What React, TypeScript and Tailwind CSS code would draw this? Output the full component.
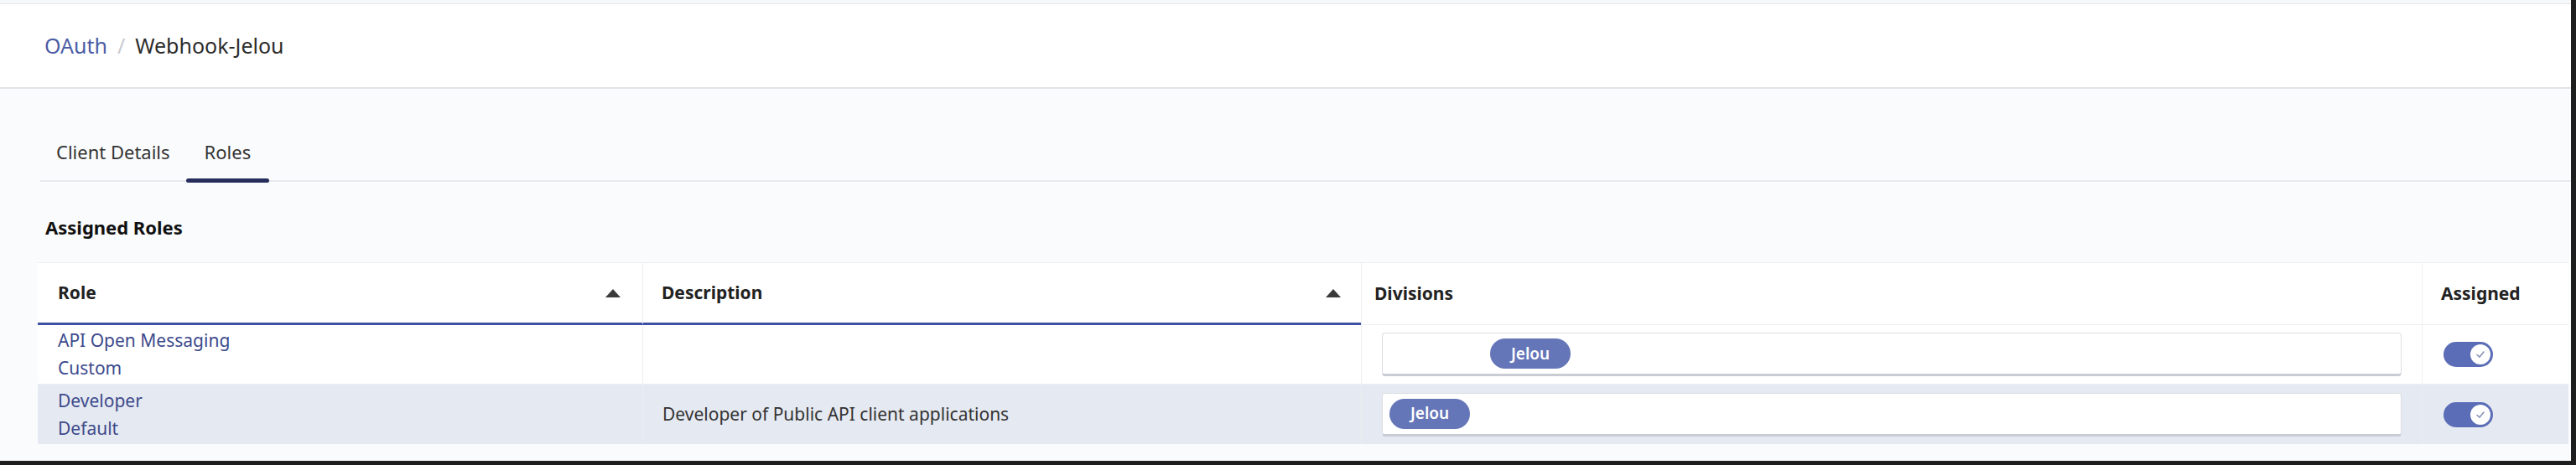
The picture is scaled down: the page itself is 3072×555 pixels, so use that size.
import React from "react";

type Row = {
  role: string;
  kind: string;
  description: string;
  pillOffset: string;
  shaded: boolean;
};

const rows: Row[] = [
  { role: "API Open Messaging", kind: "Custom", description: "", pillOffset: "ml-[128px]", shaded: false },
  {
    role: "Developer",
    kind: "Default",
    description: "Developer of Public API client applications",
    pillOffset: "ml-[8px]",
    shaded: true,
  },
];

function SortArrow() {
  return (
    <svg width="22" height="12" viewBox="0 0 22 12" className="shrink-0">
      <path d="M11 1 L20 11 L2 11 Z" fill="#3a3a3a" />
    </svg>
  );
}

function Toggle() {
  return (
    <div className="flex h-[30px] w-[59px] items-center justify-end rounded-full bg-[#5b6db7] pr-[3px]">
      <div className="flex h-[24px] w-[24px] items-center justify-center rounded-full bg-white">
        <svg width="14" height="14" viewBox="0 0 14 14">
          <path d="M3 7.5 L6 10 L11 4" fill="none" stroke="#8a93b8" strokeWidth="1.6" strokeLinecap="round" />
        </svg>
      </div>
    </div>
  );
}

export default function App() {
  return (
    <div
      className="flex h-[555px] w-[3072px] flex-col overflow-hidden border-b-[5px] border-r-[6px] border-[#1e1e1e] bg-[#fafbfc] text-[#222]"
      style={{ fontFamily: '"Noto Sans", "Open Sans", sans-serif' }}
    >
      <div className="h-[5px] border-b border-[#e4e5e8] bg-[#f6f7f8]" />

      {/* breadcrumb header */}
      <header className="flex h-[101px] items-center border-b-2 border-[#e2e3e6] bg-white pl-[53px] text-[25px]">
        <span className="text-[#4b5ca6]">OAuth</span>
        <span className="mx-[12px] text-[#c9cbd0]">/</span>
        <span className="text-[#2c2c2c]">Webhook-Jelou</span>
      </header>

      {/* tabs */}
      <div className="ml-[48px] mt-[56px] flex h-[55px] items-stretch border-b-2 border-[#e8e9ec] text-[22px] text-[#333]">
        <div className="px-[19px] pt-[3px]">Client Details</div>
        <div className="relative px-[22px] pt-[3px]">
          Roles
          <div className="absolute bottom-[-3px] left-[0px] right-[0px] h-[5px] rounded-full bg-[#262c5c]" />
        </div>
      </div>

      <div className="ml-[54px] mt-[38px] text-[22px] font-bold text-[#111]">Assigned Roles</div>

      {/* table */}
      <div className="ml-[45px] mr-[3px] mt-[25px] border-t border-[#eceef1] bg-white text-[21px]">
        <div className="grid grid-cols-[721px_857px_1265px_175px]">
          <div className="flex h-[74px] items-center justify-between border-b-[3px] border-[#3f51a5] pl-[24px] pr-[24px] font-bold">
            <span>Role</span>
            <SortArrow />
          </div>
          <div className="flex h-[74px] items-center justify-between border-b-[3px] border-l border-[#3f51a5] border-l-[#eceef1] pl-[22px] pr-[22px] font-bold">
            <span>Description</span>
            <SortArrow />
          </div>
          <div className="flex h-[74px] items-center border-b border-l border-[#eceef1] pl-[15px] font-bold">
            Divisions
          </div>
          <div className="flex h-[74px] items-center border-b border-l border-[#eceef1] pl-[22px] font-bold">
            Assigned
          </div>

          {rows.map((r) => (
            <React.Fragment key={r.role}>
              <div
                className={`flex h-[71px] flex-col justify-center pl-[24px] leading-[33px] text-[#3d4a8c] ${
                  r.shaded ? "bg-[#e5e9f1]" : "border-b border-[#eceef1]"
                }`}
              >
                <span>{r.role}</span>
                <span>{r.kind}</span>
              </div>
              <div
                className={`flex h-[71px] items-center border-l border-[#eceef1] pl-[23px] text-[#333] ${
                  r.shaded ? "bg-[#e5e9f1]" : "border-b"
                }`}
              >
                {r.description}
              </div>
              <div
                className={`flex h-[71px] items-center border-l border-[#eceef1] pl-[24px] pr-[24px] ${
                  r.shaded ? "bg-[#e5e9f1]" : "border-b"
                }`}
              >
                <div className="flex h-[52px] w-full items-center rounded-[4px] border border-[#dcdee3] border-b-[3px] border-b-[#c9ccd3] bg-white">
                  <span
                    className={`${r.pillOffset} flex h-[36px] w-[96px] items-center justify-center rounded-full bg-[#6475b8] text-[19px] font-semibold text-white`}
                  >
                    Jelou
                  </span>
                </div>
              </div>
              <div
                className={`flex h-[71px] items-center border-l border-[#eceef1] pl-[25px] ${
                  r.shaded ? "bg-[#e5e9f1]" : "border-b"
                }`}
              >
                <Toggle />
              </div>
            </React.Fragment>
          ))}
        </div>
      </div>
    </div>
  );
}
